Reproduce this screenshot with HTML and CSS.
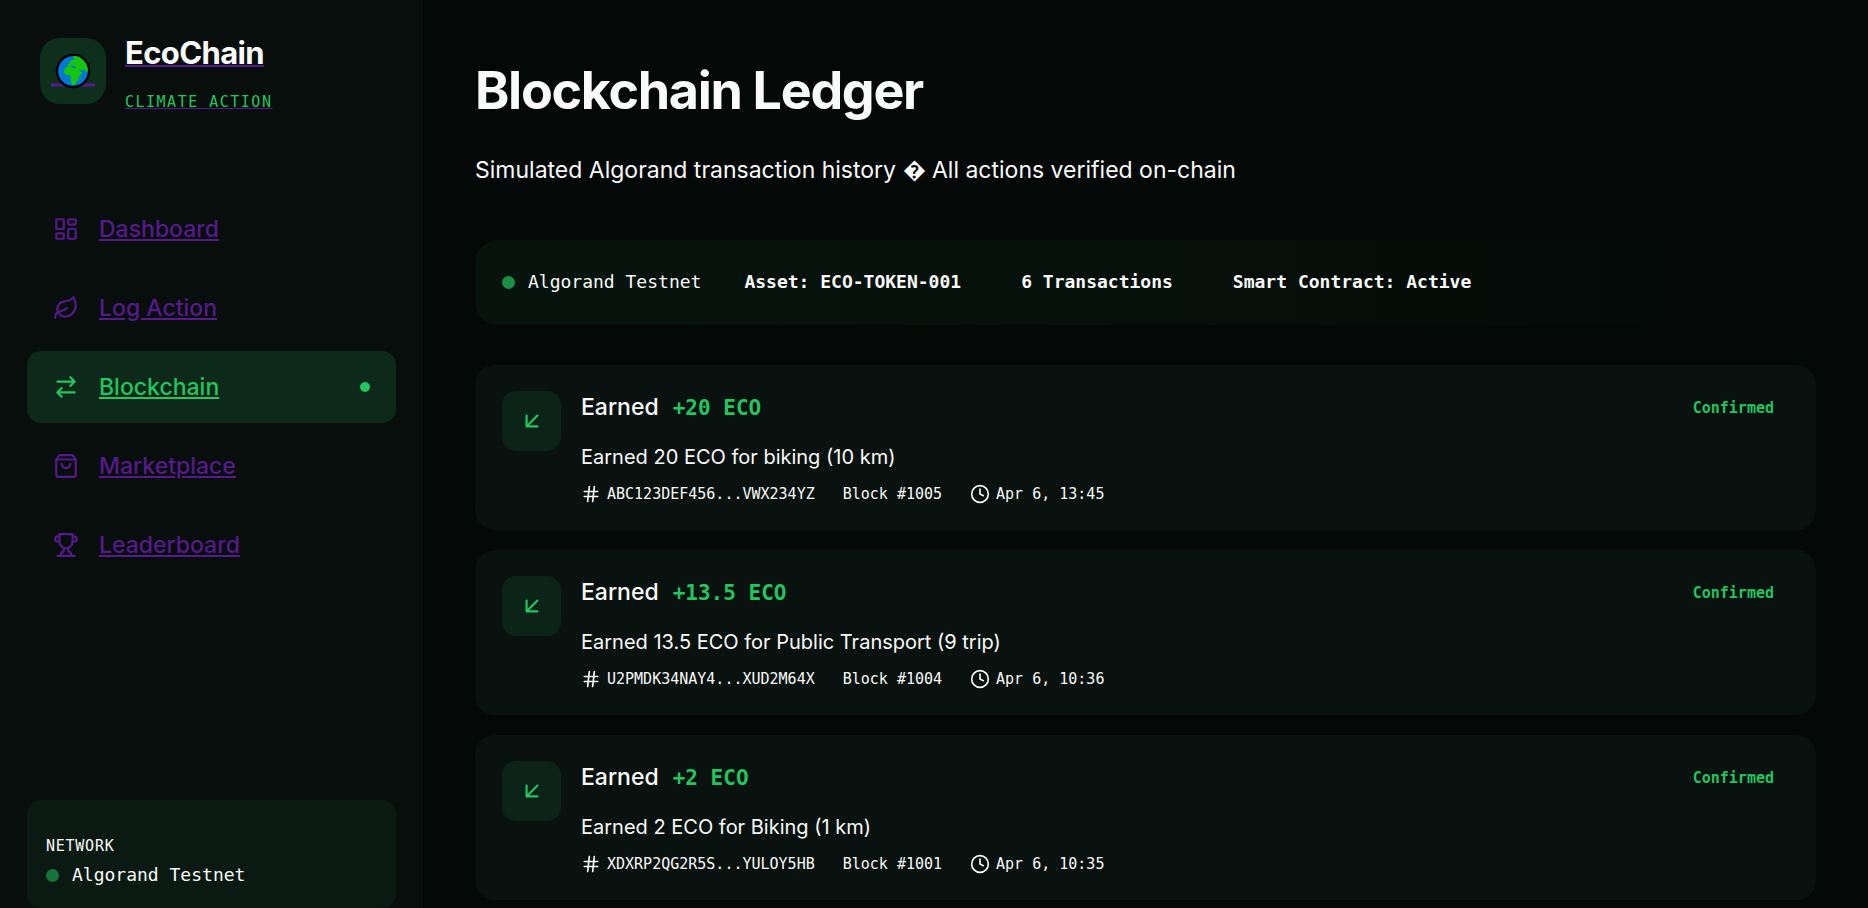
FILE: index.html
```
<!DOCTYPE html>
<html lang="en">
<head>
<meta charset="utf-8">
<title>EcoChain</title>
<link rel="stylesheet" href="styles.css">
</head>
<body>
<svg class="sprite" aria-hidden="true">
  <symbol id="arrow" viewBox="0 0 24 24"><path d="M17 7 7 17M17 17H7V7"/></symbol>
  <symbol id="hash" viewBox="0 0 24 24"><path d="M4 9h16M4 15h16M10 3 8 21M16 3l-2 18"/></symbol>
  <symbol id="clock" viewBox="0 0 24 24"><circle cx="12" cy="12" r="10"/><path d="M12 6v6l4 2"/></symbol>
</svg>
<div class="app">
  <aside class="sidebar">
    <a class="brand" href="#">
      <span class="brand-logo">
        <svg class="globe" viewBox="0 0 44 36">
          <path d="M0 32h44" stroke="#551a8b" stroke-width="3"/>
          <circle cx="22" cy="18" r="16" fill="#0078d7" stroke="#000" stroke-width="2.4"/>
          <path fill="#16c60c" d="M22 3.200c3-.4 6 .4 8.500 2.300 3.600 2.600 5.800 6.400 6.300 10.600l-.5 2.900-1.300.3-1-2.300-2-.6-1.300 1.800-2.200-2.300.8 2.800 2 .4-1 2-2.800 2.700-.3 3.200-1.700 1.400-.5 2-2.200 1.600-1.700-.3-1.400-4.700.2-2.800-1.200-2.200-4.200-.2-1.800-2.200.5-2.800 2-2.600 2.800-.7 3 .6.600 1 3.400.2.100-1.500-2.500-.3-1.500-1.600-1.600 1.600-2.800.1-.2-2 2.400-.8-1.200-1.600 1.500-.6 2.200-1.600 2.800-.4-1.600-1.600z"/>
          <path fill="#16c60c" d="m28.500 24.500 1.200-1.200v1.900l-1 1.200z"/>
        </svg>
      </span>
      <span class="brand-text">
        <span class="brand-name">EcoChain</span>
        <span class="brand-tag">CLIMATE ACTION</span>
      </span>
    </a>
    <nav class="nav">
      <a class="nav-link" href="#"><svg class="icon" viewBox="0 0 24 24"><rect x="3" y="3" width="7" height="9" rx="1"/><rect x="14" y="3" width="7" height="5" rx="1"/><rect x="14" y="12" width="7" height="9" rx="1"/><rect x="3" y="16" width="7" height="5" rx="1"/></svg><span>Dashboard</span></a>
      <a class="nav-link" href="#"><svg class="icon" viewBox="0 0 24 24"><path d="M11 20A7 7 0 0 1 9.800 6.100C15.500 5 17 4.480 19 2c1 2 2 4.180 2 8 0 5.500-4.780 10-10 10Z"/><path d="M2 21c0-3 1.850-5.360 5.080-6C9.500 14.520 12 13 13 12"/></svg><span>Log Action</span></a>
      <a class="nav-link active" href="#" aria-current="page"><svg class="icon" viewBox="0 0 24 24"><path d="m16 3 4 4-4 4M20 7H4M8 21l-4-4 4-4M4 17h16"/></svg><span>Blockchain</span><i class="nav-dot"></i></a>
      <a class="nav-link" href="#"><svg class="icon" viewBox="0 0 24 24"><path d="M6 2 3 6v14a2 2 0 0 0 2 2h14a2 2 0 0 0 2-2V6l-3-4ZM3 6h18M16 10a4 4 0 0 1-8 0"/></svg><span>Marketplace</span></a>
      <a class="nav-link" href="#"><svg class="icon" viewBox="0 0 24 24"><path d="M6 9H4.500a2.500 2.500 0 0 1 0-5H6M18 9h1.500a2.500 2.500 0 0 0 0-5H18M4 22h16M10 14.660V17c0 .55-.47.98-.97 1.210C7.850 18.750 7 20.240 7 22M14 14.660V17c0 .55.47.98.97 1.210C16.150 18.750 17 20.240 17 22M18 2H6v7a6 6 0 0 0 12 0V2Z"/></svg><span>Leaderboard</span></a>
    </nav>
    <section class="network">
      <span class="network-label">NETWORK</span>
      <span class="network-name"><i class="dot"></i>Algorand Testnet</span>
    </section>
  </aside>
  <main class="main">
    <h1 class="title">Blockchain Ledger</h1>
    <p class="subtitle">Simulated Algorand transaction history &#xFFFD; All actions verified on-chain</p>
    <section class="status">
      <span class="status-net"><i class="dot"></i>Algorand Testnet</span>
      <div class="status-facts"><strong>Asset: ECO-TOKEN-001</strong><strong>6 Transactions</strong><strong>Smart Contract: Active</strong></div>
    </section>
    <section class="ledger">
      <article class="tx">
        <span class="tx-icon"><svg class="icon"><use href="#arrow"/></svg></span>
        <div class="tx-body">
          <h2 class="tx-head">Earned <span class="tx-amount">+20 ECO</span></h2>
          <p class="tx-desc">Earned 20 ECO for biking (10 km)</p>
          <div class="tx-meta"><span class="meta"><svg class="icon"><use href="#hash"/></svg>ABC123DEF456...VWX234YZ</span><span class="meta">Block #1005</span><span class="meta"><svg class="icon"><use href="#clock"/></svg>Apr 6, 13:45</span></div>
        </div>
        <span class="tx-state">Confirmed</span>
      </article>
      <article class="tx">
        <span class="tx-icon"><svg class="icon"><use href="#arrow"/></svg></span>
        <div class="tx-body">
          <h2 class="tx-head">Earned <span class="tx-amount">+13.5 ECO</span></h2>
          <p class="tx-desc">Earned 13.5 ECO for Public Transport (9 trip)</p>
          <div class="tx-meta"><span class="meta"><svg class="icon"><use href="#hash"/></svg>U2PMDK34NAY4...XUD2M64X</span><span class="meta">Block #1004</span><span class="meta"><svg class="icon"><use href="#clock"/></svg>Apr 6, 10:36</span></div>
        </div>
        <span class="tx-state">Confirmed</span>
      </article>
      <article class="tx">
        <span class="tx-icon"><svg class="icon"><use href="#arrow"/></svg></span>
        <div class="tx-body">
          <h2 class="tx-head">Earned <span class="tx-amount">+2 ECO</span></h2>
          <p class="tx-desc">Earned 2 ECO for Biking (1 km)</p>
          <div class="tx-meta"><span class="meta"><svg class="icon"><use href="#hash"/></svg>XDXRP2QG2R5S...YULOY5HB</span><span class="meta">Block #1001</span><span class="meta"><svg class="icon"><use href="#clock"/></svg>Apr 6, 10:35</span></div>
        </div>
        <span class="tx-state">Confirmed</span>
      </article>
    </section>
  </main>
</div>
</body>
</html>
```
FILE: styles.css
```
:root {
  --mono: "DejaVu Sans Mono", monospace;
  --green: #22c55e;
  --visited: #551a8b;
  --text: #fafafa;
}
* { box-sizing: border-box; }
body {
  margin: 0;
  background: #040807;
  color: var(--text);
  font-family: Inter, sans-serif;
  font-size: 23px;
  line-height: 36px;
}
h1, h2, p { margin: 0; }
.sprite { display: none; }
.icon {
  width: 26px;
  height: 26px;
  flex: none;
  fill: none;
  stroke: currentColor;
  stroke-width: 2;
  stroke-linecap: round;
  stroke-linejoin: round;
}
.app { display: flex; height: 100vh; overflow: hidden; }

.sidebar {
  width: 423px;
  flex: none;
  display: flex;
  flex-direction: column;
  padding: 30px 27px 0;
  background: #080e0c;
}
.brand {
  display: flex;
  gap: 19px;
  padding: 0 13px;
  color: var(--visited);
  text-decoration: none;
}
.brand-logo {
  width: 66px;
  height: 66px;
  margin-top: 8px;
  display: grid;
  place-items: center;
  border-radius: 20px;
  background: #0d2f1b;
}
.globe { width: 44px; height: 36px; }
.brand-text { display: flex; flex-direction: column; align-items: flex-start; gap: 14px; }
.brand-name { color: var(--text); font-size: 31px; font-weight: 700; line-height: 46px; letter-spacing: -0.02em; text-decoration: underline 2px var(--visited); }
.brand-tag { color: var(--green); font: 15px/24px var(--mono); letter-spacing: 0.1em; text-decoration: underline 1px var(--visited); }

.nav { display: flex; flex-direction: column; gap: 7px; margin-top: 79px; }
.nav-link {
  display: flex;
  align-items: center;
  gap: 20px;
  height: 72px;
  padding: 0 26px;
  border-radius: 14px;
  color: var(--visited);
  font-weight: 500;
}
.nav-link.active { background: #0c2919; color: var(--green); }
.nav-dot { width: 10px; height: 10px; margin-left: auto; border-radius: 50%; background: var(--green); }

.network {
  display: flex;
  flex-direction: column;
  gap: 3px;
  margin-top: auto;
  padding: 34px 19px 19px;
  border-radius: 14px;
  background: #0a1912;
  font-family: var(--mono);
}
.network-label { font-size: 15px; line-height: 24px; letter-spacing: 0.05em; }
.network-name, .status-net { display: flex; align-items: center; gap: 13px; font-size: 18px; line-height: 28px; }
.dot { width: 13px; height: 13px; border-radius: 50%; background: #177337; }

.main { flex: 1; min-width: 0; padding: 52px 52px 0; }
.title { font-size: 52px; font-weight: 700; line-height: 78px; letter-spacing: -0.025em; }
.subtitle { margin-top: 22px; }
.status {
  display: flex;
  align-items: center;
  gap: 43px;
  margin-top: 52px;
  padding: 28px 27px 29px;
  border-radius: 24px;
  background: linear-gradient(90deg, #07140d, #06100a 50%, #040807);
  font: 18px/28px var(--mono);
}
.status .dot { background: #1a9045; }
.status-facts { display: flex; gap: 60px; }

.ledger { display: flex; flex-direction: column; gap: 20px; margin-top: 40px; }
.tx {
  display: flex;
  align-items: flex-start;
  gap: 20px;
  padding: 26px 42px 22px 27px;
  border-radius: 20px;
  background: #09120e;
}
.tx-icon {
  width: 59px;
  height: 60px;
  display: grid;
  place-items: center;
  flex: none;
  border-radius: 14px;
  background: #0c2318;
  color: var(--green);
}
.tx-body { flex: 1; }
.tx-head { display: flex; align-items: baseline; gap: 14px; font-size: 23px; font-weight: 500; line-height: 32px; }
.tx-amount { color: var(--green); font: 700 21px/32px var(--mono); }
.tx-desc { margin-top: 17px; font-size: 20px; line-height: 32px; }
.tx-meta { display: flex; gap: 28px; margin-top: 7px; font: 15px/28px var(--mono); }
.meta { display: flex; align-items: center; gap: 6px; }
.meta .icon { width: 20px; height: 20px; }
.tx-state { color: var(--green); font: 700 15px/34px var(--mono); }
```
